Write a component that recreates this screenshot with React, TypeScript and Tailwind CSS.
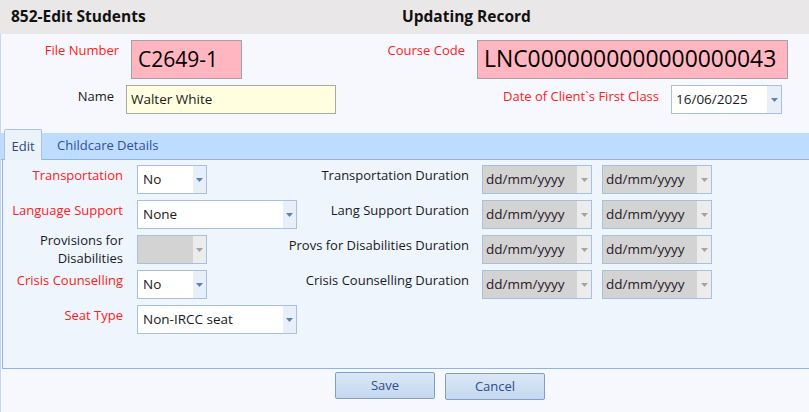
import React from "react";

const Arrow = ({ disabled }: { disabled?: boolean }) => (
  <svg width="7" height="4" viewBox="0 0 7 4">
    <path d="M0 0H7L3.5 4Z" fill={disabled ? "#a3a3a3" : "#5b7fb8"} />
  </svg>
);

function Select({ value, wide, disabled }: { value: string; wide?: boolean; disabled?: boolean }) {
  return (
    <div
      className={`flex h-[29px] border border-[#a9bfdf] ${wide ? "w-[160px]" : "w-[70px]"} ${
        disabled ? "bg-[#d3d3d3]" : "bg-white"
      }`}
    >
      <div className="flex flex-1 items-center pl-[5px] text-[13.5px] text-[#1a1a1a]">{value}</div>
      <div
        className={`flex w-[13px] items-center justify-center ${disabled ? "bg-[#ececec]" : "bg-[#e8eff9]"}`}
      >
        <Arrow disabled={disabled} />
      </div>
    </div>
  );
}

function DateBox() {
  return (
    <div className="flex h-[29px] w-[110px] border border-[#a9bfdf] bg-[#d3d3d3]">
      <div className="flex flex-1 items-center pl-[3px] text-[13.5px] text-[#2a1a2a]">dd/mm/yyyy</div>
      <div className="flex w-[14px] items-center justify-center bg-[#ececec]">
        <Arrow disabled />
      </div>
    </div>
  );
}

type Row = {
  label: React.ReactNode;
  red: boolean;
  value: string;
  wide?: boolean;
  disabled?: boolean;
  right?: string;
  twoLine?: boolean;
};

const rows: Row[] = [
  { label: "Transportation", red: true, value: "No", right: "Transportation Duration" },
  { label: "Language Support", red: true, value: "None", wide: true, right: "Lang Support Duration" },
  {
    label: (
      <>
        Provisions for
        <br />
        Disabilities
      </>
    ),
    red: false,
    value: "",
    disabled: true,
    twoLine: true,
    right: "Provs for Disabilities Duration",
  },
  { label: "Crisis Counselling", red: true, value: "No", right: "Crisis Counselling Duration" },
  { label: "Seat Type", red: true, value: "Non-IRCC seat", wide: true },
];

export default function App() {
  return (
    <div
      className="flex h-[412px] w-[809px] flex-col overflow-hidden bg-[#f6f8fd] text-[13px] text-[#1a1a1a]"
      style={{ fontFamily: '"Open Sans", sans-serif' }}
    >
      {/* header */}
      <div className="flex h-[34px] shrink-0 items-center bg-[#e9e7e8] text-[15.5px] font-bold text-[#111]">
        <div className="w-[402px] pl-[11px]">852-Edit Students</div>
        <div>Updating Record</div>
      </div>

      <div className="flex flex-1 flex-col border-l border-[#c6d8f0]">
        {/* row 1 */}
        <div className="flex items-start pt-[6px]">
          <div className="w-[118px] text-right leading-[20px] text-[#ff2020]">File Number</div>
          <div className="ml-[12px] flex h-[39px] w-[111px] items-center border border-[#a3a3a3] bg-[#ffb6c1] pl-[6px] text-[21px] text-black">
            C2649-1
          </div>
          <div className="w-[223px] text-right leading-[20px] text-[#ff2020]">Course Code</div>
          <div className="ml-[12px] flex h-[39px] w-[311px] items-center border border-[#a3a3a3] bg-[#ffb6c1] pl-[6px] text-[22.9px] text-black">
            LNC0000000000000000043
          </div>
        </div>

        {/* row 2 */}
        <div className="mt-[6px] flex items-start">
          <div className="mt-[1px] w-[113px] text-right leading-[20px]">Name</div>
          <div className="ml-[12px] flex h-[29px] w-[210px] items-center border border-[#a9a9a9] bg-[#ffffe0] pl-[4px] text-[13.5px]">
            Walter White
          </div>
          <div className="mt-[1px] w-[323px] text-right leading-[20px] text-[#ff2020]">
            Date of Client`s First Class
          </div>
          <div className="ml-[12px] flex h-[29px] w-[111px] border border-[#a9bfdf] bg-white">
            <div className="flex flex-1 items-center pl-[4px] text-[13.5px]">16/06/2025</div>
            <div className="flex w-[14px] items-center justify-center bg-[#e8eff9]">
              <Arrow />
            </div>
          </div>
        </div>

        {/* tabs */}
        <div className="mt-[15px] flex h-[31px] items-end border-b border-[#8fb4e8] bg-[linear-gradient(to_bottom,transparent_4px,#bedcff_4px)]">
          <div className="-mb-px ml-[3px] flex h-[31px] w-[38px] items-center justify-center rounded-t-[2px] border border-b-0 border-[#a9c3e6] bg-[#ecf2fa] pt-[3px] text-[#2c4a7c]">
            Edit
          </div>
          <div className="ml-[15px] flex h-[26px] items-center text-[#30509a]">Childcare Details</div>
        </div>

        {/* panel */}
        <div className="ml-[1px] flex h-[209px] flex-col gap-[6px] border-b border-l border-[#8fb4e8] bg-[#eff5fd] pt-[5px]">
          {rows.map((r, i) => (
            <div key={i} className="flex h-[29px] items-start">
              <div
                className={`flex w-[120px] justify-end whitespace-nowrap text-right ${
                  r.twoLine ? "-mt-[4px] leading-[18px]" : "leading-[20px]"
                } ${r.red ? "text-[#ff2020]" : "text-[#1a1a1a]"}`}
              >
                <div>{r.label}</div>
              </div>
              <div className="ml-[14px] w-[160px]">
                <Select value={r.value} wide={r.wide} disabled={r.disabled} />
              </div>
              {r.right && (
                <>
                  <div className="flex w-[172px] justify-end whitespace-nowrap leading-[20px]">
                    <div>{r.right}</div>
                  </div>
                  <div className="ml-[13px]">
                    <DateBox />
                  </div>
                  <div className="ml-[10px]">
                    <DateBox />
                  </div>
                </>
              )}
            </div>
          ))}
        </div>

        {/* buttons */}
        <div className="mt-[3px] flex gap-[10px] pl-[334px]">
          <button className="flex h-[27px] w-[100px] items-center justify-center rounded-[2px] border border-[#7f9fc9] bg-[linear-gradient(to_bottom,#dbe7f6,#c4d8ef)] text-[13px] text-[#2b4d8c]">
            Save
          </button>
          <button className="mt-[1px] flex h-[27px] w-[100px] items-center justify-center rounded-[2px] border border-[#7f9fc9] bg-[linear-gradient(to_bottom,#dbe7f6,#c4d8ef)] text-[13px] text-[#2b4d8c]">
            Cancel
          </button>
        </div>
      </div>
    </div>
  );
}
